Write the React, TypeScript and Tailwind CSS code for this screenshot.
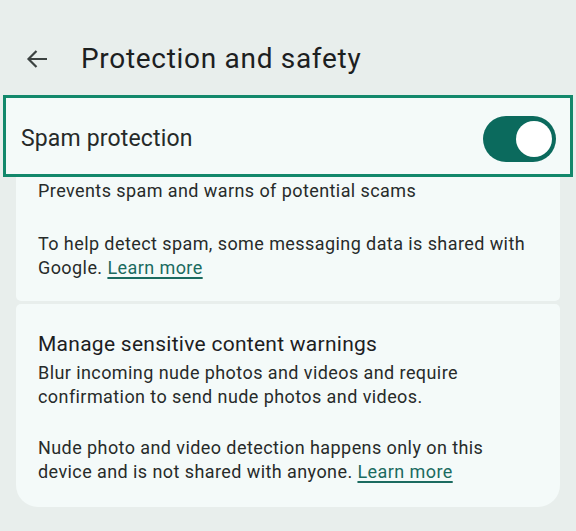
import React from 'react';

const font = { fontFamily: 'Roboto, "Noto Sans", sans-serif' };

const LearnMore = () => (
  <a className="text-[#1b6b60] underline underline-offset-[3px] decoration-[1.5px]">Learn more</a>
);

export default function App() {
  const [spamOn, setSpamOn] = React.useState(true);

  return (
    <div className="w-[576px] h-[531px] overflow-hidden bg-[#e8eeec] text-[#1c201f]" style={font}>
      {/* Header */}
      <div className="h-[95px] flex items-center pl-[26px] pt-[22px]">
        <svg width="22" height="20" viewBox="0 0 22 20" className="text-[#3c4241]">
          <path d="M21 10H2.5M10.5 2L2.5 10L10.5 18" fill="none" stroke="currentColor" strokeWidth="2.2" />
        </svg>
        <h1 className="ml-[33px] text-[28px] leading-[34px] font-normal tracking-[0.7px]">Protection and safety</h1>
      </div>

      {/* Highlighted spam protection row */}
      <div className="mx-[3px] h-[82px] border-[3px] border-[#12886b] bg-[#f4faf9] flex items-center justify-between pl-[15px] pr-[14px] pt-[6px]">
        <span className="text-[23px] tracking-[0.15px] text-[#262a29]">Spam protection</span>
        <button
          onClick={() => setSpamOn(!spamOn)}
          className="w-[73px] h-[46px] rounded-full bg-[#0b6a5d] flex items-center justify-end pr-[4px]"
        >
          <span className="w-[36px] h-[36px] rounded-full bg-white" />
        </button>
      </div>

      {/* Card 1 remainder */}
      <div className="mx-4 bg-[#f4faf9] rounded-b-[5px] px-[22px] pt-[2px] pb-[21px] text-[18px] leading-[24px] tracking-[0.42px] text-[#272b2a]">
        <p>Prevents spam and warns of potential scams</p>
        <p className="mt-[29px]">
          To help detect spam, some messaging data is shared with Google. <LearnMore />
        </p>
      </div>

      {/* Card 2 */}
      <div className="mx-4 mt-[3px] bg-[#f4faf9] rounded-t-[5px] rounded-b-[22px] px-[22px] pt-[26px] pb-[23px] text-[#272b2a]">
        <h2 className="text-[21px] leading-[28px] tracking-[0.27px] text-[#1c201f]">Manage sensitive content warnings</h2>
        <p className="text-[18px] leading-[24px] tracking-[0.42px] mt-[3px]">
          Blur incoming nude photos and videos and require confirmation to send nude photos and videos.
        </p>
        <p className="text-[18px] leading-[24px] tracking-[0.42px] mt-[27px]">
          Nude photo and video detection happens only on this device and is not shared with anyone. <LearnMore />
        </p>
      </div>
    </div>
  );
}
